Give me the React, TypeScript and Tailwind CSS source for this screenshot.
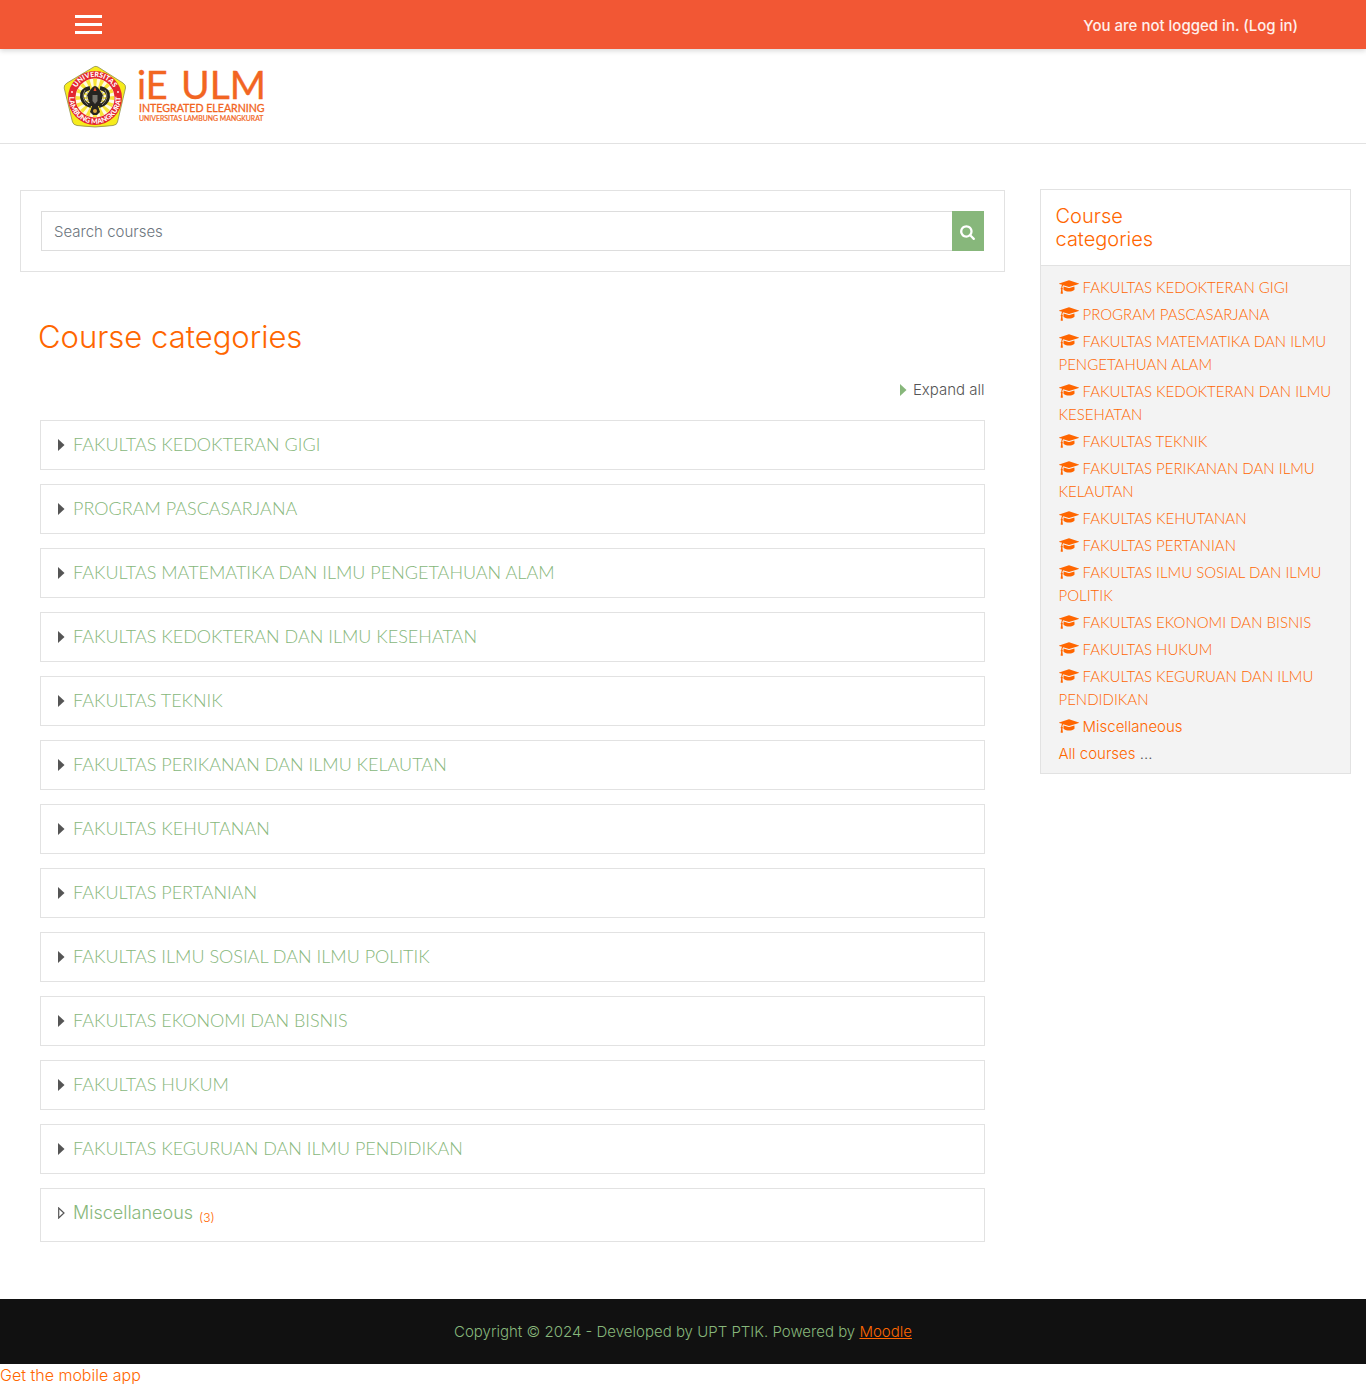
const categories = [
  "FAKULTAS KEDOKTERAN GIGI",
  "PROGRAM PASCASARJANA",
  "FAKULTAS MATEMATIKA DAN ILMU PENGETAHUAN ALAM",
  "FAKULTAS KEDOKTERAN DAN ILMU KESEHATAN",
  "FAKULTAS TEKNIK",
  "FAKULTAS PERIKANAN DAN ILMU KELAUTAN",
  "FAKULTAS KEHUTANAN",
  "FAKULTAS PERTANIAN",
  "FAKULTAS ILMU SOSIAL DAN ILMU POLITIK",
  "FAKULTAS EKONOMI DAN BISNIS",
  "FAKULTAS HUKUM",
  "FAKULTAS KEGURUAN DAN ILMU PENDIDIKAN",
];

const rays = Array.from({ length: 16 }, (_, i) => i * 22.5);

function Seal() {
  return (
    <svg viewBox="0 0 64 64" className="mt-px size-16" aria-hidden="true">
      <path
        d="M31.500 1.500Q33 1 35 2L60 18Q63 20 62.500 23L54.500 57Q54 60 50 60.500Q32 63.500 14 60.500Q10.500 60 9.500 57L1.200 23Q.7 20 4 18Z"
        fill="#f6ec1c"
        stroke="#8d8b52"
        strokeWidth=".8"
      />
      <circle cx="32" cy="33" r="27" fill="#e3262f" />
      <circle cx="32" cy="33" r="19.500" fill="#fffbe0" />
      {rays.map((a) => (
        <path key={a} d="M32 33L30 13.800H34Z" fill="#f8e437" transform={`rotate(${a} 32 33)`} />
      ))}
      <g fill="none" stroke="#262420" strokeWidth="4">
        <path d="M27 23Q18 25 19 32Q20 39 28 41M37 23Q46 25 45 32Q44 39 36 41" />
      </g>
      <g fill="#262420">
        <path d="M28 24Q32 18 36 24L40 30L37 41H27L24 30Z" />
        <path d="M29 41H35L37 47L34 50H30L27 47Z" />
      </g>
      <path
        d="M22 25Q17 33 25 40M25 27Q21 34 27 38M42 25Q47 33 39 40M39 27Q43 34 37 38"
        fill="none"
        stroke="#a79f88"
        strokeWidth=".8"
      />
      <path d="M32 22L33.500 26H30.500Z" fill="#ef4a25" />
      <path d="M29.500 30H34.500V36L32 39L29.500 36Z" fill="#77746c" />
      <circle cx="32" cy="46" r="2" fill="#d7a53a" />
      <path id="seal-top" d="M10.800 33A21.200 21.200 0 0 1 53.200 33" fill="none" />
      <path id="seal-bottom" d="M7 27A25.700 25.700 0 1 0 57 27" fill="none" />
      <g fill="#fff" fontFamily="Lato, sans-serif" fontWeight="900" textAnchor="middle">
        <text fontSize="7">
          <textPath href="#seal-top" startOffset="50%">UNIVERSITAS</textPath>
        </text>
        <text fontSize="7">
          <textPath href="#seal-bottom" startOffset="50%">LAMBUNG MANGKURAT</textPath>
        </text>
      </g>
      <circle cx="9" cy="27" r=".9" fill="#fff" />
      <circle cx="55" cy="27" r=".9" fill="#fff" />
    </svg>
  );
}

function Logo() {
  return (
    <a href="#home" aria-label="iE ULM Integrated Elearning" className="flex items-center gap-2">
      <Seal />
      <svg viewBox="-4 0 140 72" className="h-[72px] w-[140px]" fill="#f26522" fontFamily="Lato, sans-serif" fontWeight="400">
        <text x="-2" y="39" fontSize="38" stroke="#f26522" strokeWidth=".4">iE</text>
        <text x="42" y="39" fontSize="39" stroke="#f26522" strokeWidth=".4">ULM</text>
        <text x="0" y="52" fontSize="10.6" stroke="#f26522" strokeWidth=".3">INTEGRATED ELEARNING</text>
        <text x="0" y="61" fontSize="6.9" stroke="#f26522" strokeWidth=".2">UNIVERSITAS LAMBUNG MANGKURAT</text>
      </svg>
    </a>
  );
}

function CapIcon() {
  return (
    <svg viewBox="0 0 2304 1792" className="mr-1 inline h-4 w-5 align-[-2px]" fill="currentColor" aria-hidden="true">
      <path d="M1774 836l18 316q4 69-82 128t-235 93.500-323 34.500-323-34.500-235-93.500-82-128l18-316 574 181q22 7 48 7t48-7zM2304 512q0 23-22 31l-1120 352q-4 1-10 1t-10-1l-652-206q-43 34-71 111.500t-34 178.500q63 36 63 109 0 69-58 107l58 433q2 14-8 25-9 11-24 11h-192q-15 0-24-11-10-11-8-25l58-433q-58-38-58-107 0-73 65-111 11-207 98-330l-333-104q-22-8-22-31t22-31l1120-352q4-1 10-1t10 1l1120 352q22 8 22 31z" />
    </svg>
  );
}

function SearchIcon() {
  return (
    <svg viewBox="0 0 1664 1792" className="h-4 w-[15px]" fill="currentColor" aria-hidden="true">
      <path d="M1152 832q0-185-131.500-316.500t-316.500-131.500-316.500 131.500-131.500 316.500 131.500 316.500 316.500 131.500 316.500-131.500 131.500-316.500zm512 832q0 52-38 90t-90 38q-54 0-90-38l-343-342q-179 124-399 124-143 0-273.500-55.500t-225-150-150-225-55.500-273.500 55.500-273.500 150-225 225-150 273.500-55.500 273.500 55.500 225 150 150 225 55.500 273.500q0 220-124 399l343 343q37 37 37 90z" />
    </svg>
  );
}

function Caret({ hollow = false }: { hollow?: boolean }) {
  return (
    <svg viewBox="0 0 7 12" className="h-3 w-[7px] shrink-0" aria-hidden="true">
      {hollow ? (
        <path d="M.7 1V11L6 6Z" fill="#fff" stroke="#555" strokeWidth="1.200" />
      ) : (
        <path d="M0 0L6.500 6L0 12Z" fill="currentColor" />
      )}
    </svg>
  );
}

export default function App() {
  return (
    <div className="bg-white font-['Inter',sans-serif] text-[15px] font-light leading-[23px] text-[#555]">
      <header>
        <nav className="flex h-[49px] items-center justify-between bg-[#f25734] pl-[75px] pr-[68px] shadow-[0_2px_5px_rgba(0,0,0,0.15)]">
          <button aria-label="Menu" className="flex w-[27px] flex-col gap-[5px]">
            <span className="h-[3px] w-full bg-white" />
            <span className="h-[3px] w-full bg-white" />
            <span className="h-[3px] w-full bg-white" />
          </button>
          <p className="pt-px font-medium text-[#ffefeb]">
            You are not logged in. (<a href="#login">Log in</a>)
          </p>
        </nav>
        <div className="flex h-[95px] items-center border-b border-[#e2e2e2] pl-[63px]">
          <Logo />
        </div>
      </header>

      <div className="flex items-start pb-[57px] pt-[45px]">
        <main className="w-3/4 px-5 pt-px">
          <form className="flex border border-[#e2e2e2] p-5" onSubmit={(e) => e.preventDefault()}>
            <input
              aria-label="Search courses"
              placeholder="Search courses"
              className="h-10 min-w-0 flex-1 border border-r-0 border-[#ddd] px-3 placeholder:text-[#6c757d]"
            />
            <button aria-label="Search" className="flex w-8 items-center justify-center bg-[#87b77b] pt-0.5 text-white">
              <SearchIcon />
            </button>
          </form>
          <h1 className="mt-[45px] pl-[18px] text-[31px] leading-10 text-[#ff6600]">Course categories</h1>
          <div className="px-5">
            <div className="mt-[22px] flex justify-end">
              <button className="flex items-center gap-1.5 text-[15px] leading-[22px]">
                <span className="text-[#87b77b]"><Caret /></span>
                Expand all
              </button>
            </div>
            <ul className="mt-[19px] flex flex-col gap-3.5">
              {categories.map((name) => (
                <li key={name} className="flex h-[50px] items-center gap-2 border border-[#e2e2e2] px-[17px]">
                  <Caret />
                  <a href="#category" className="pb-0.5 font-['Lato',sans-serif] text-lg leading-6 text-[#87b77b]">{name}</a>
                </li>
              ))}
              <li className="flex h-[54px] items-center gap-2 border border-[#e2e2e2] px-[17px] pb-1">
                <Caret hollow />
                <a href="#category" className="text-lg leading-6 text-[#87b77b]">Miscellaneous</a>
                <span className="-ml-0.5 pt-2.5 text-xs text-[#ff6600]">(3)</span>
              </li>
            </ul>
          </div>
        </main>

        <aside className="w-1/4 px-[15px]">
          <div className="border border-[#e2e2e2]">
            <h2 className="border-b border-[#e2e2e2] px-[15px] pb-3.5 pt-[15px] text-xl leading-[23px] text-[#ff6600]">
              Course
              <br />
              categories
            </h2>
            <ul className="flex flex-col gap-1 bg-[#f3f3f3] pb-2 pl-[18px] pr-4 pt-2.5 text-[#ff6600]">
              {categories.map((name) => (
                <li key={name} className="font-['Lato',sans-serif]">
                  <a href="#category">
                    <CapIcon />
                    {name}
                  </a>
                </li>
              ))}
              <li>
                <a href="#category">
                  <CapIcon />
                  Miscellaneous
                </a>
              </li>
              <li className="text-[#555]">
                <a href="#all" className="text-[#ff6600]">All courses</a> ...
              </li>
            </ul>
          </div>
        </aside>
      </div>

      <footer>
        <p className="bg-[#111] py-[21px] text-center text-[#87b77b]">
          Copyright © 2024 - Developed by UPT PTIK. Powered by{" "}
          <a href="#moodle" className="text-[#ff6600] underline">Moodle</a>
        </p>
        <a href="#app" className="block text-base leading-[22px] text-[#ff6600]">Get the mobile app</a>
      </footer>
    </div>
  );
}
